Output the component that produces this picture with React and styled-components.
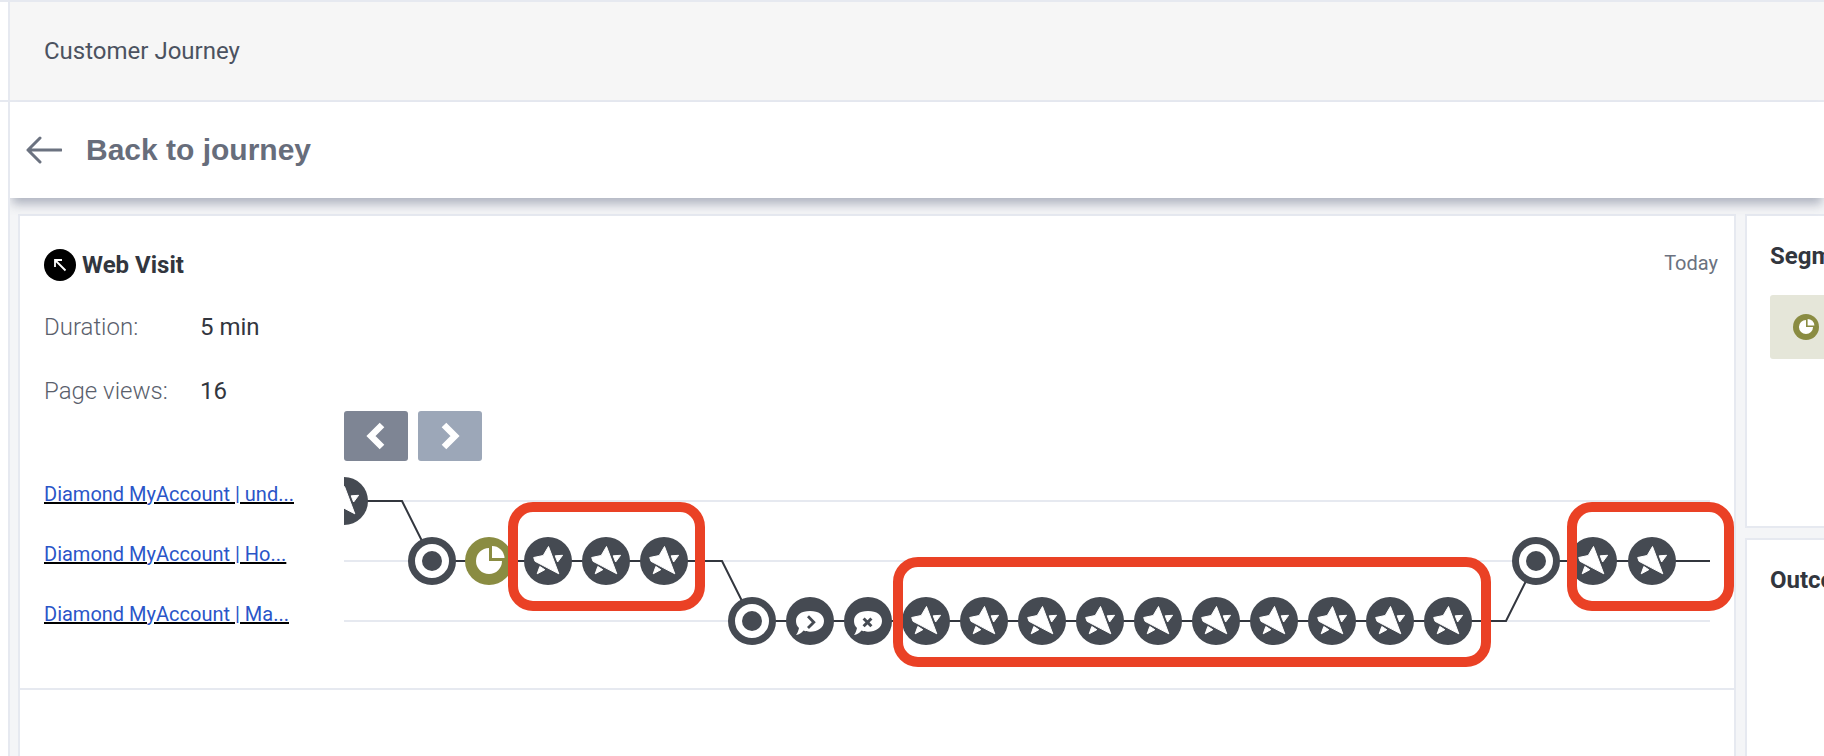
import React from "react";
import styled, { createGlobalStyle } from "styled-components";

const GlobalStyle = createGlobalStyle`
  html, body {
    margin: 0;
    padding: 0;
    height: 100%;
    overflow: hidden;
    background: #fff;
  }
  * { box-sizing: border-box; }
`;

const ROW_Y = [30, 90, 150];
const STEP = 58;

// [x, row, kind]
const NODES = [
  [0, 0, "star"],
  [88, 1, "target"],
  [145, 1, "segment"],
  [204, 1, "star"],
  [262, 1, "star"],
  [320, 1, "star"],
  [408, 2, "target"],
  [466, 2, "chatNext"],
  [524, 2, "chatClose"],
  ...Array.from({ length: 10 }, (_, i) => [582 + i * STEP, 2, "star"]),
  [1192, 1, "target"],
  [1249, 1, "star"],
  [1308, 1, "star"],
];

const PATH =
  "M0 30 H58 L88 90 H349 L378 90 L408 150 H1162 L1192 90 H1366";

function StarNode() {
  return (
    <>
      <circle r="24" fill="#454a52" />
      <path
        fill="#fff"
        stroke="#fff"
        strokeWidth="1"
        strokeLinejoin="round"
        d="M0.5 -14.5 L10.8 12.8 L-13 0.3 L-14.3 -3.5 L-4.8 -5.5 Z M7.2 -5.2 L14.6 -5.7 L9.6 1 Z M-8.2 5.5 L-3.2 8.7 L-10.8 12.8 Z"
      />
    </>
  );
}

function TargetNode() {
  return (
    <>
      <circle r="20.5" fill="#fff" stroke="#454a52" strokeWidth="7" />
      <circle r="10" fill="#454a52" />
    </>
  );
}

function SegmentNode() {
  return (
    <>
      <circle r="24" fill="#8a8c42" />
      <path fill="#fff" d="M0 -13 A13 13 0 1 0 13 0 H0 Z" />
      <path fill="#fff" d="M3 -15 A12.5 12.5 0 0 1 15.5 -3 H3 Z" />
    </>
  );
}

function ChatNode({ close }) {
  return (
    <>
      <circle r="24" fill="#454a52" />
      <path
        fill="#fff"
        d="M0 -10 C9 -10 14 -6 14 0 C14 6.5 8 10.7 0 10.7 C-2.5 10.7 -4.5 10.3 -6.5 9.5 C-8.5 12 -11 13.7 -14 14 C-12.5 12 -11.5 9.5 -11 7 C-13 5 -14 3 -14 0 C-14 -6 -9 -10 0 -10 Z"
      />
      {close ? (
        <path d="M-4.4 -2.5 L3.4 5.3 M3.4 -2.5 L-4.4 5.3" stroke="#454a52" strokeWidth="3" fill="none" />
      ) : (
        <path d="M-2 -4.7 L3.8 1.2 L-2 7" stroke="#454a52" strokeWidth="2.8" fill="none" />
      )}
    </>
  );
}

function Node({ kind }) {
  if (kind === "target") return <TargetNode />;
  if (kind === "segment") return <SegmentNode />;
  if (kind === "chatNext") return <ChatNode />;
  if (kind === "chatClose") return <ChatNode close />;
  return <StarNode />;
}

function App() {
  return (
    <>
      <GlobalStyle />
      <Page>
        <Gutter>
          <GutterTop />
        </Gutter>
        <Main>
          <TitleBar>Customer Journey</TitleBar>
          <BackBar>
            <svg width="36" height="28" viewBox="0 0 36 28" fill="none">
              <path
                d="M35 14 H2 M14 2 L2 14 L14 26"
                stroke="#6b7280"
                strokeWidth="3"
                strokeLinecap="round"
                strokeLinejoin="round"
              />
            </svg>
            <BackLabel>Back to journey</BackLabel>
          </BackBar>
          <Content>
            <VisitCard>
              <VisitBody>
                <VisitHead>
                  <VisitTitle>
                    <svg width="32" height="32" viewBox="0 0 32 32">
                      <circle cx="16" cy="16" r="16" fill="#000" />
                      <path
                        d="M21.5 21.5 L11 11 M11 18 V11 H18"
                        stroke="#fff"
                        strokeWidth="1.8"
                        fill="none"
                      />
                    </svg>
                    Web Visit
                  </VisitTitle>
                  <Today>Today</Today>
                </VisitHead>
                <Stat>
                  <StatLabel>Duration:</StatLabel>
                  <StatValue>5 min</StatValue>
                </Stat>
                <Stat>
                  <StatLabel>Page views:</StatLabel>
                  <StatValue>16</StatValue>
                </Stat>
                <Journey>
                  <PageLinks>
                    <PageLink href="#">Diamond MyAccount | und...</PageLink>
                    <PageLink href="#">Diamond MyAccount | Ho...</PageLink>
                    <PageLink href="#">Diamond MyAccount | Ma...</PageLink>
                  </PageLinks>
                  <Timeline>
                    <Pager>
                      <PagerButton>
                        <svg width="24" height="28" viewBox="0 0 24 28">
                          <path d="M18 3 L7 14 L18 25" stroke="#fff" strokeWidth="6.5" fill="none" />
                        </svg>
                      </PagerButton>
                      <PagerButton $disabled>
                        <svg width="24" height="28" viewBox="0 0 24 28">
                          <path d="M6 3 L17 14 L6 25" stroke="#fff" strokeWidth="6.5" fill="none" />
                        </svg>
                      </PagerButton>
                    </Pager>
                    <Track>
                      <svg width="1366" height="180" viewBox="0 0 1366 180">
                        {ROW_Y.map((y) => (
                          <line key={y} x1="0" x2="1366" y1={y} y2={y} stroke="#e6e9f0" strokeWidth="2" />
                        ))}
                        <path d={PATH} fill="none" stroke="#32363e" strokeWidth="2" />
                        {NODES.map(([x, row, kind], i) => (
                          <g key={i} transform={`translate(${x} ${ROW_Y[row]})`}>
                            <Node kind={kind} />
                          </g>
                        ))}
                      </svg>
                      <Highlight $left={164} $top={31} $width={197} $height={109} />
                      <Highlight $left={549} $top={86} $width={598} $height={110} />
                      <Highlight $left={1223} $top={31} $width={167} $height={109} />
                    </Track>
                  </Timeline>
                </Journey>
              </VisitBody>
            </VisitCard>
            <SideColumn>
              <SegmentsPanel>
                <PanelTitle>Segments</PanelTitle>
                <SegmentChip>
                  <svg width="26" height="26" viewBox="-24 -24 48 48">
                    <SegmentNode />
                  </svg>
                </SegmentChip>
              </SegmentsPanel>
              <OutcomesPanel>
                <PanelTitle>Outcomes</PanelTitle>
              </OutcomesPanel>
            </SideColumn>
          </Content>
        </Main>
      </Page>
    </>
  );
}

export default App;

const Page = styled.div`
  display: flex;
  width: 1824px;
  height: 756px;
  overflow: hidden;
  background: #fff;
  font-family: Roboto, "Liberation Sans", sans-serif;
`;

const Gutter = styled.div`
  position: relative;
  z-index: 2;
  flex: 0 0 10px;
  background: #fff;
  border-right: 2px solid #e6e9f0;
`;

const GutterTop = styled.div`
  height: 102px;
  border-top: 2px solid #e6e9f0;
  border-bottom: 2px solid #e6e9f0;
`;

const Main = styled.div`
  flex: 1;
  min-width: 0;
  display: flex;
  flex-direction: column;
`;

const TitleBar = styled.div`
  height: 102px;
  padding-left: 34px;
  display: flex;
  align-items: center;
  background: #f6f6f6;
  border-top: 2px solid #e6e9f0;
  border-bottom: 2px solid #e6e9f0;
  color: #4b5260;
  font-size: 24px;
`;

const BackBar = styled.div`
  position: relative;
  z-index: 1;
  height: 96px;
  padding-left: 16px;
  display: flex;
  align-items: center;
  gap: 24px;
  background: #fff;
  box-shadow: 0 8px 10px -2px rgba(90, 100, 125, 0.45);
`;

const BackLabel = styled.span`
  font-family: "Liberation Sans", Arial, sans-serif;
  font-size: 30px;
  font-weight: 700;
  color: #676d7b;
`;

const Content = styled.div`
  flex: 1;
  min-height: 0;
  display: flex;
  gap: 9px;
  padding: 16px 0 0 8px;
  background: #f4f5f7;
`;

const VisitCard = styled.section`
  flex: 0 0 1718px;
  background: #fff;
  border: 2px solid #e6e9f0;
  border-bottom: 0;
`;

const VisitBody = styled.div`
  height: 474px;
  padding: 33px 16px 0 24px;
  border-bottom: 2px solid #e6e9f0;
`;

const VisitHead = styled.div`
  display: flex;
  justify-content: space-between;
  align-items: center;
  height: 32px;
  margin-bottom: 14px;
`;

const VisitTitle = styled.h2`
  margin: 0;
  display: flex;
  align-items: center;
  gap: 6px;
  font-size: 24px;
  font-weight: 700;
  color: #32363e;
`;

const Today = styled.span`
  margin-bottom: 4px;
  font-size: 20px;
  color: #6b7280;
`;

const Stat = styled.div`
  display: flex;
  align-items: center;
  height: 64px;
  font-size: 24px;
`;

const StatLabel = styled.span`
  flex: 0 0 156px;
  font-weight: 300;
  color: #5a606c;
`;

const StatValue = styled.span`
  color: #32363e;
`;

const Journey = styled.div`
  display: flex;
`;

const PageLinks = styled.div`
  flex: 0 0 300px;
  padding-top: 59px;
  display: flex;
  flex-direction: column;
  gap: 36px;
`;

const PageLink = styled.a`
  height: 24px;
  line-height: 24px;
  font-size: 20px;
  color: #2a55c8;
  text-decoration: underline;
  text-decoration-color: #000;
  white-space: nowrap;
`;

const Timeline = styled.div`
  min-width: 0;
  margin-top: -12px;
`;

const Pager = styled.div`
  display: flex;
  gap: 10px;
`;

const PagerButton = styled.div`
  width: 64px;
  height: 50px;
  border-radius: 3px;
  display: flex;
  align-items: center;
  justify-content: center;
  background: ${(p) => (p.$disabled ? "#9ca7b8" : "#7e8594")};
`;

const Track = styled.div`
  position: relative;
  margin-top: 10px;
  width: 1366px;
  height: 180px;
  svg { display: block; }
`;

const Highlight = styled.div`
  position: absolute;
  left: ${(p) => p.$left}px;
  top: ${(p) => p.$top}px;
  width: ${(p) => p.$width}px;
  height: ${(p) => p.$height}px;
  border: 10px solid #ea4125;
  border-radius: 25px;
`;

const SideColumn = styled.div`
  flex: 1;
  display: flex;
  flex-direction: column;
  gap: 10px;
  min-width: 300px;
`;

const SegmentsPanel = styled.section`
  height: 314px;
  padding: 26px 0 0 23px;
  background: #fff;
  border: 2px solid #e6e9f0;
  border-right: 0;
`;

const OutcomesPanel = styled.section`
  flex: 1;
  padding: 26px 0 0 23px;
  background: #fff;
  border: 2px solid #e6e9f0;
  border-right: 0;
  border-bottom: 0;
`;

const PanelTitle = styled.h3`
  margin: 0;
  font-size: 24px;
  font-weight: 700;
  color: #32363e;
  white-space: nowrap;
`;

const SegmentChip = styled.div`
  margin-top: 25px;
  width: 260px;
  height: 64px;
  padding-left: 23px;
  display: flex;
  align-items: center;
  border-radius: 3px;
  background: #e5e6d9;
`;
